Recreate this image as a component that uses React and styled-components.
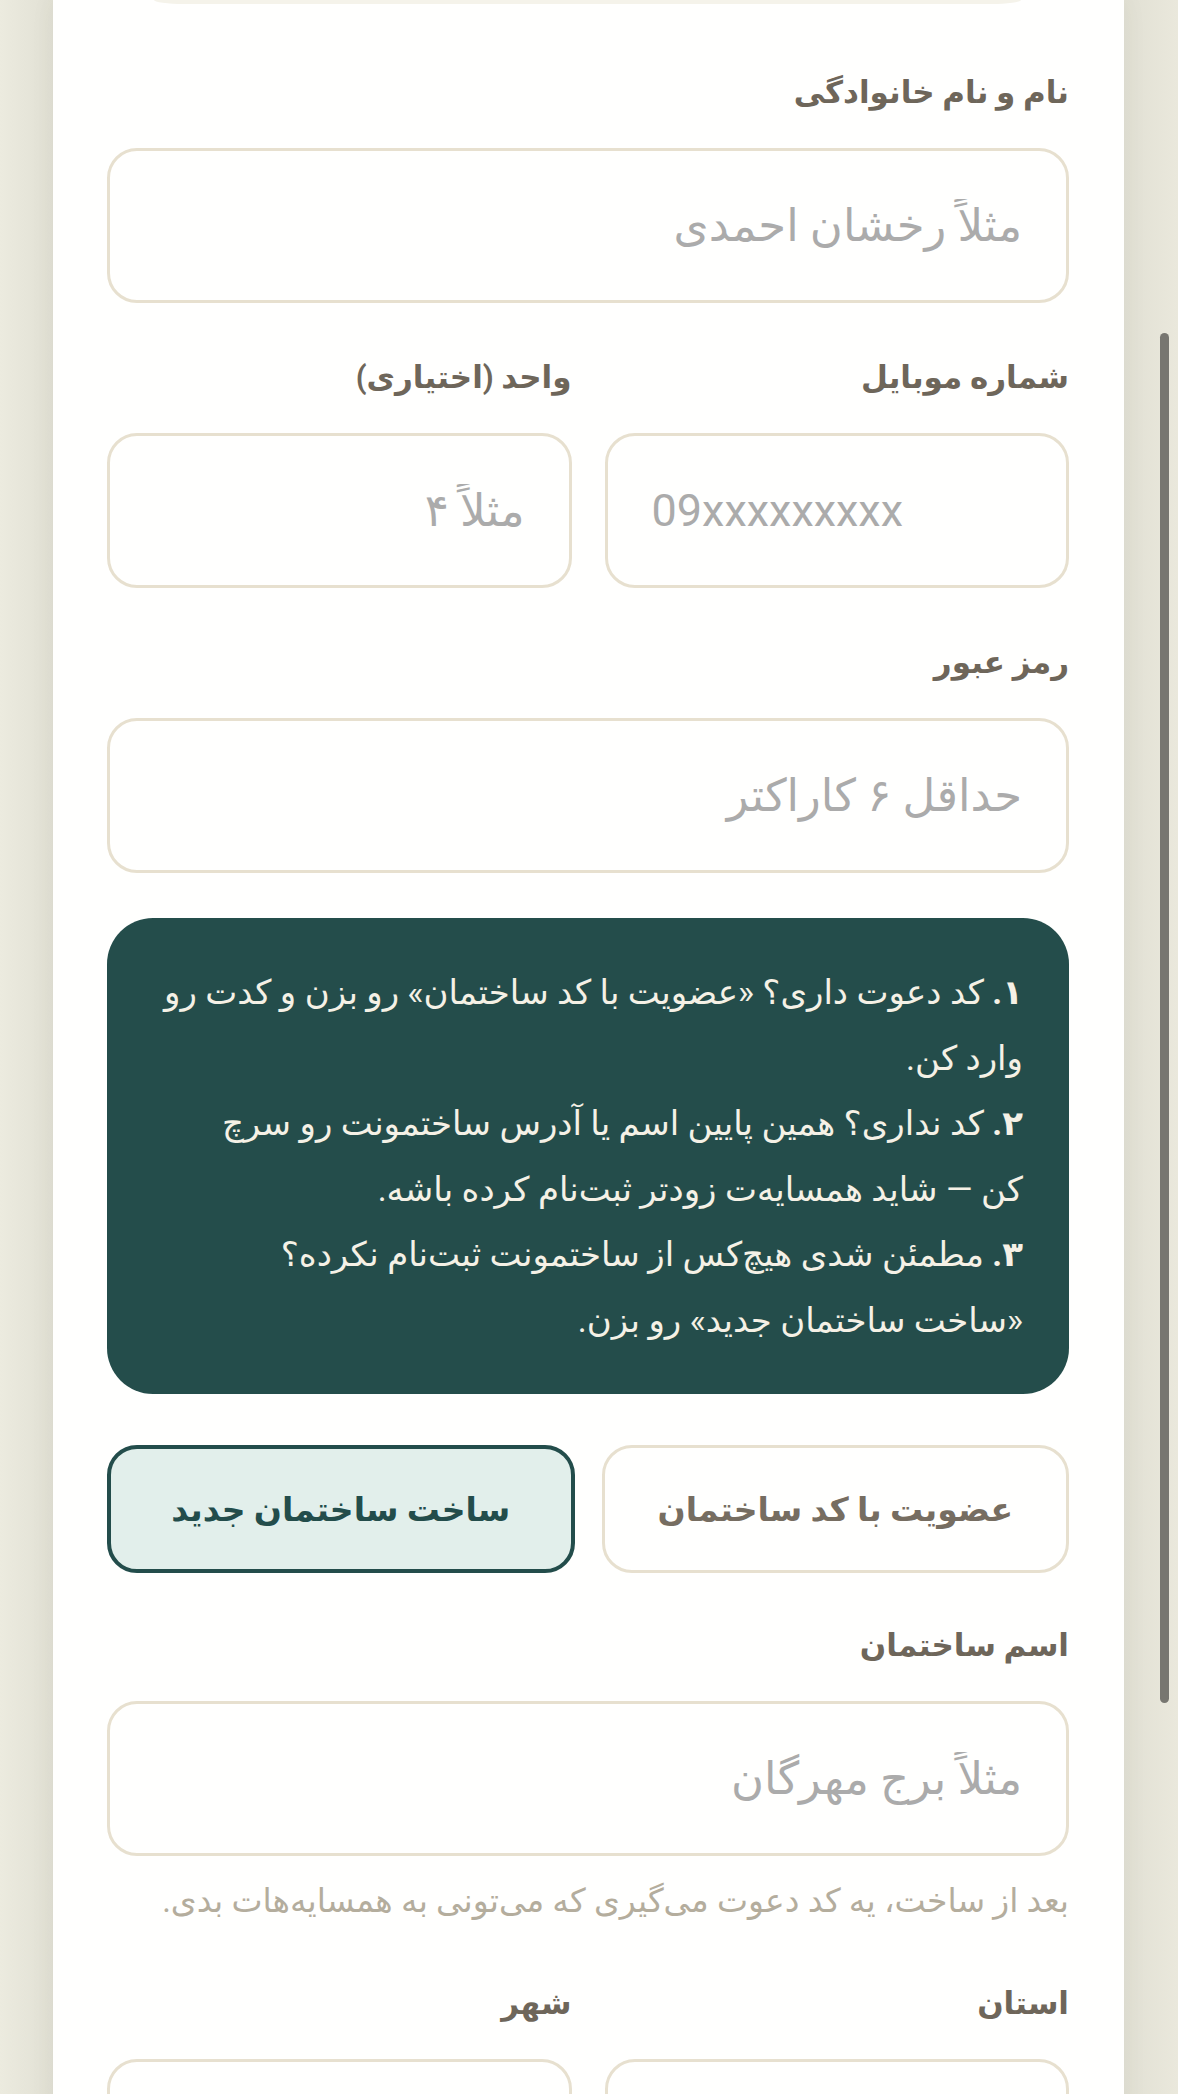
import React from 'react';
import styled, { createGlobalStyle } from 'styled-components';

const GlobalStyle = createGlobalStyle`
  html, body {
    margin: 0;
    padding: 0;
    overflow: hidden;
    background: #eae8dc;
  }
  * { box-sizing: border-box; }
`;

const FONT = `Roboto, "DejaVu Sans", sans-serif`;

const Page = styled.div`
  position: relative;
  height: 2094px;
  overflow: hidden;
  padding: 0 54px 0 53px;
  background: linear-gradient(90deg, #ecebdf 0px, #e1e0d4 53px, #e1e0d4 1125px, #eae8dc 1178px);
  font-family: ${FONT};
  direction: rtl;
`;

const Card = styled.div`
  background: #fffffe;
  min-height: 2094px;
  padding: 0 55px 0 54px;
  box-shadow: 0 0 24px rgba(90, 80, 50, 0.06);
`;

const TabEdge = styled.div`
  height: 4px;
  margin: 0 48px 0 47px;
  background: #f5f3ea;
  border-radius: 0 0 30px 30px / 0 0 4px 4px;
`;

const Block = styled.div`
  margin-top: ${p => p.$top || 0}px;
`;

const Row = styled.div`
  display: grid;
  grid-template-columns: 1fr 1fr;
  column-gap: ${p => p.$gap || 33}px;
  margin-top: ${p => p.$top || 0}px;
`;

const Label = styled.div`
  font-size: 31px;
  font-weight: 700;
  line-height: 40px;
  color: #6e665a;
  margin-bottom: 35px;
`;

const Input = styled.input`
  display: block;
  width: 100%;
  height: 155px;
  border: 3px solid #e7e0cf;
  border-radius: 30px;
  background: #fffffe;
  padding: 0 44px;
  font-family: ${FONT};
  font-size: 45px;
  color: #3d3a33;
  direction: ${p => (p.$ltr ? 'ltr' : 'rtl')};
  text-align: ${p => (p.$ltr ? 'left' : 'right')};
  outline: none;

  &::placeholder {
    color: #ababab;
  }
`;

const InfoBox = styled.div`
  margin-top: 45px;
  background: #244d4b;
  border-radius: 46px;
  padding: 42px 46px 41px 46px;
  color: #f5f1e6;
  font-size: 34px;
  line-height: 65.5px;
`;

const Step = styled.p`
  margin: 0;

  b {
    font-weight: 700;
  }
`;

const ChoiceButton = styled.button`
  height: 128px;
  border-radius: 30px;
  border: ${p => (p.$active ? '4px solid #234d4b' : '3px solid #e7e0cf')};
  background: ${p => (p.$active ? '#e2efeb' : '#fffffe')};
  color: ${p => (p.$active ? '#234d4b' : '#766d61')};
  font-family: ${FONT};
  font-size: 33px;
  font-weight: 700;
  cursor: pointer;
`;

const Hint = styled.div`
  margin-top: 27px;
  font-size: 33px;
  line-height: 36px;
  color: #b4ad9d;
`;

const ScrollThumb = styled.div`
  position: absolute;
  top: 333px;
  right: 9px;
  width: 9px;
  height: 1370px;
  border-radius: 5px;
  background: #777670;
`;

function Field({ label, placeholder, ltr, top }) {
  return (
    <Block $top={top}>
      <Label>{label}</Label>
      <Input placeholder={placeholder} $ltr={ltr} />
    </Block>
  );
}

export default function App() {
  return (
    <Page>
      <GlobalStyle />
      <Card>
        <TabEdge />
        <Field top={69} label="نام و نام خانوادگی" placeholder="مثلاً رخشان احمدی" />

        <Row $top={55}>
          <Block>
            <Label>شماره موبایل</Label>
            <Input placeholder="09xxxxxxxxx" $ltr />
          </Block>
          <Block>
            <Label>واحد (اختیاری)</Label>
            <Input placeholder="مثلاً ۴" />
          </Block>
        </Row>

        <Field top={55} label="رمز عبور" placeholder="حداقل ۶ کاراکتر" />

        <InfoBox>
          <Step>
            <b>۱.</b> کد دعوت داری؟ «عضویت با کد ساختمان» رو بزن و کدت رو
            <br />
            وارد کن.
          </Step>
          <Step>
            <b>۲.</b> کد نداری؟ همین پایین اسم یا آدرس ساختمونت رو سرچ
            <br />
            کن — شاید همسایه‌ت زودتر ثبت‌نام کرده باشه.
          </Step>
          <Step>
            <b>۳.</b> مطمئن شدی هیچ‌کس از ساختمونت ثبت‌نام نکرده؟
            <br />
            «ساخت ساختمان جدید» رو بزن.
          </Step>
        </InfoBox>

        <Row $top={51} $gap={27}>
          <ChoiceButton>عضویت با کد ساختمان</ChoiceButton>
          <ChoiceButton $active>ساخت ساختمان جدید</ChoiceButton>
        </Row>

        <Field top={53} label="اسم ساختمان" placeholder="مثلاً برج مهرگان" />
        <Hint>بعد از ساخت، یه کد دعوت می‌گیری که می‌تونی به همسایه‌هات بدی.</Hint>

        <Row $top={65}>
          <Block>
            <Label>استان</Label>
            <Input />
          </Block>
          <Block>
            <Label>شهر</Label>
            <Input />
          </Block>
        </Row>
      </Card>
      <ScrollThumb />
    </Page>
  );
}
